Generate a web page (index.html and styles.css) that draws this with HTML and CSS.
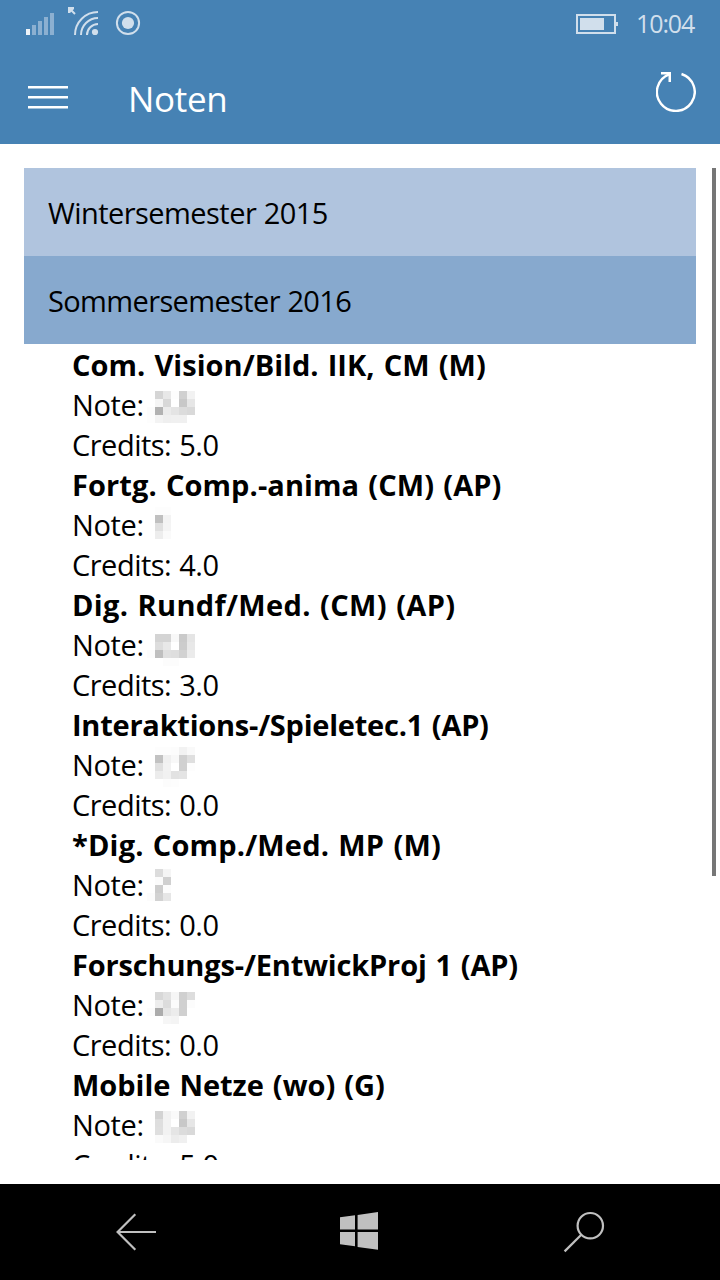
FILE: index.html
```html
<!DOCTYPE html>
<html lang="de">
<head>
<meta charset="utf-8">
<title>Noten</title>
<link rel="stylesheet" href="styles.css">
</head>
<body>
<div class="phone">
  <header class="top">
    <div class="status">
      <svg class="status-left" width="120" height="32" viewBox="24 5 120 32">
        <path fill="#eef3f8" d="M26 29h4v6h-4z"/>
        <path fill="#8cb0d1" d="M32 25h4v10h-4zM38 21h4v14h-4zM44 17h4v18h-4zM50 13h4v22h-4z"/>
        <g fill="none" stroke="#d1dfec" stroke-width="2">
          <path d="M75 35A23 23 0 0 1 98 12M81 35A17 17 0 0 1 98 18M87 35A11 11 0 0 1 98 24"/>
          <circle cx="128" cy="23" r="11.1"/>
          <path d="M69.500 8.500L75 14"/>
        </g>
        <path fill="#d1dfec" d="M68 7h6v2l-4 4h-2z"/>
        <circle fill="#d1dfec" cx="95" cy="32" r="3.100"/>
        <circle fill="#d1dfec" cx="128" cy="23" r="6.100"/>
      </svg>
      <div class="status-right">
        <svg width="42" height="20" viewBox="0 0 42 20">
          <path fill="none" stroke="#d1dfec" stroke-width="2" d="M1 1h38v18H1z"/>
          <path fill="#d1dfec" d="M4 4h24v12H4zM40 8h2v4h-2z"/>
        </svg>
        <span class="clock">10:04</span>
      </div>
    </div>
    <div class="appbar">
      <svg class="menu" width="40" height="24" viewBox="0 0 40 24">
        <path fill="#fff" d="M0 0h40v2H0zM0 10h40v2H0zM0 20h40v2H0z"/>
        <path fill="#a3c1da" d="M0 2h40v1H0zM0 12h40v1H0zM0 22h40v1H0z"/>
      </svg>
      <h1 class="title">Noten</h1>
      <svg class="refresh" width="40" height="40" viewBox="0 0 40 40">
        <path fill="none" stroke="#fff" stroke-width="2.400" d="M25.500 2A18.900 18.900 0 1 1 13 2.400"/>
        <path fill="#fff" d="M5 0h10v10h-2.500V2.400H5z"/>
      </svg>
    </div>
  </header>
  <main class="content">
    <div class="semester winter">Wintersemester 2015</div>
    <div class="semester summer">Sommersemester 2016</div>
    <ul class="grades" id="grades"></ul>
    <div class="scrollbar"></div>
  </main>
  <nav class="keys">
    <svg width="720" height="96" viewBox="0 1184 720 96">
      <path fill="none" stroke="#c0c0c0" stroke-width="2.200" d="M156 1232H118M135.300 1214.300L117.600 1232L135.300 1249.700"/>
      <path fill="#c0c0c0" d="M340 1217.200L355 1215.200V1229.500H340zM357.600 1214.900L378 1212V1229.500H357.600zM340 1232H355V1246.200L340 1244.200zM357.600 1232H378V1249.700L357.600 1247z"/>
      <g fill="none" stroke="#c0c0c0" stroke-width="2.200"><circle cx="590.300" cy="1225.700" r="12.700"/><path d="M581.300 1234.700L564.600 1251.400"/></g>
    </svg>
  </nav>
</div>
<script src="app.js"></script>
</body>
</html>
```
FILE: styles.css
```css
* { box-sizing: border-box; }
body { margin: 0; background: #fff; font-family: "Open Sans", "Noto Sans", sans-serif; color: #000; }
.phone { width: 720px; height: 1280px; display: flex; flex-direction: column; overflow: hidden; }
.top { height: 144px; background: #4682b4; color: #fff; display: flex; flex-direction: column; }
.status { height: 48px; display: flex; justify-content: space-between; padding: 0 24px; }
.status-left { margin-top: 5px; }
.status-right { display: flex; align-items: center; gap: 18px; color: #d1dfec; }
.clock { font-size: 25px; line-height: 46px; padding-bottom: 2px; width: 60px; white-space: nowrap; letter-spacing: -1.1px; }
.appbar { height: 96px; display: flex; align-items: flex-start; padding: 0 24px 0 28px; }
.menu { margin-top: 38px; }
.title { margin: 26px 0 0 60px; font-size: 35px; line-height: 50px; font-weight: 400; flex: 1; letter-spacing: -0.3px; }
.refresh { margin-top: 24px; }
.content { height: 1040px; padding: 24px 24px; position: relative; display: flex; flex-direction: column; }
.semester { flex: none; height: 88px; line-height: 88px; padding: 1px 0 0 24px; font-size: 29px; white-space: nowrap; }
.winter { background: #b0c4de; letter-spacing: -0.55px; word-spacing: 0.6px; }
.summer { background: #87a9ce; letter-spacing: -0.63px; word-spacing: 0.6px; }
.grades { list-style: none; margin: 0; padding: 1px 0 0 48px; flex: 1; min-height: 0; overflow: hidden; font-size: 29px; line-height: 40px; white-space: nowrap; }
.course { height: 40px; font-weight: 700; word-spacing: 1.5px; }
.note { height: 40px; display: flex; letter-spacing: -0.35px; }
.note span { width: 75px; }
.credits { height: 40px; letter-spacing: -0.5px; word-spacing: 1px; }
.scrollbar { position: absolute; right: 4px; top: 24px; width: 4px; height: 708px; background: #767676; }
.keys { height: 96px; background: #000; }
.keys svg { display: block; }
```
FILE: app.js
```js
const courses = [
  { name: 'Com. Vision/Bild. IIK, CM (M)', spacing: 0.04, credits: '5.0', top: 6, rows: ['ff d5 e8 fd d0 f2', 'ff f5 d8 ff c8 e6', 'fc b2 eb e4 dc d9', 'fd f3 ef f0 f0 ff'] },
  { name: 'Fortg. Comp.-anima (CM) (AP)', spacing: 0.09, credits: '4.0', top: 2, rows: ['ff fd fd', 'ff c0 f3', 'ff e0 f4', 'ff ed fa'] },
  { name: 'Dig. Rundf/Med. (CM) (AP)', spacing: 0.32, credits: '3.0', top: 9, rows: ['ff d4 d4 f8 ca e5', 'ff dd e8 ff cc e8', 'fc bf e0 de d2 eb', 'ff ff fc fc ff ff'] },
  { name: 'Interaktions-/Spieletec.1 (AP)', spacing: -0.24, credits: '0.0', top: 2, rows: ['ff fd fd fc f2 f9', 'ff c2 f0 f8 d0 df', 'ff e0 f2 ff d0 fd', 'ff ec f1 e2 e4 ff', 'ff ff fc fd ff ff'] },
  { name: '*Dig. Comp./Med. MP (M)', spacing: 0.17, credits: '0.0', top: 4, rows: ['ff dc f5', 'ff fb d0', 'ff cd fc', 'fc d2 e6'] },
  { name: 'Forschungs-/EntwickProj 1 (AP)', spacing: -0.16, credits: '0.0', top: 7, rows: ['ff d8 e2 f6 d0 dd', 'ff ed dc fb d0 fc', 'fc ac e5 ec d0 ff', 'ff ff f6 f4 ff ff'] },
  { name: 'Mobile Netze (wo) (G)', spacing: -0.02, credits: '5.0', top: 6, rows: ['ff d3 f2 fa d0 f2', 'ff de f2 ff c8 e6', 'ff df f2 e5 dc d9', 'ff fa f6 ec f0 ff'] },
];

// Pixelated cover over the grade value, one grey level per 8px cell
const mosaic = ({ top, rows }) => rows.map((row, y) => row.split(' ').map((c, x) =>
  `<rect x="${x * 8}" y="${top + y * 8}" width="8" height="8" fill="#${c}${c}${c}"/>`).join('')).join('');

document.getElementById('grades').innerHTML = courses.map(c => `
  <li>
    <div class="course" style="letter-spacing:${c.spacing}px">${c.name}</div>
    <div class="note"><span>Note:</span><svg width="48" height="42">${mosaic(c)}</svg></div>
    <div class="credits">Credits: ${c.credits}</div>
  </li>`).join('');
```
